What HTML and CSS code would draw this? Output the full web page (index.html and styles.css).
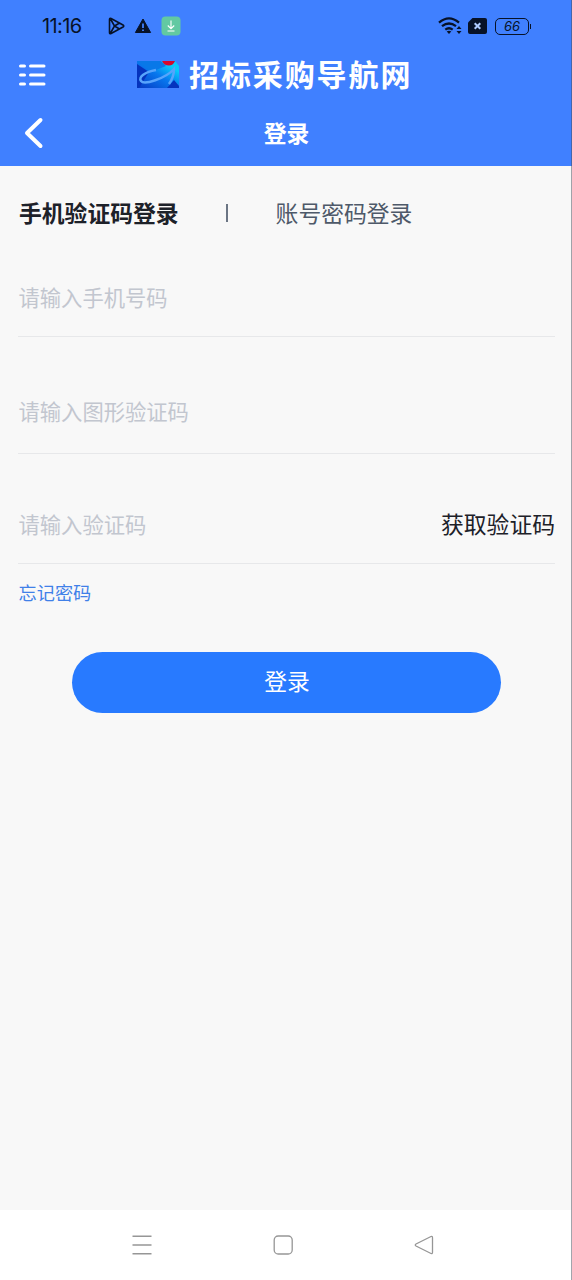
FILE: index.html
```html
<!DOCTYPE html>
<html lang="zh-CN">
<head>
<meta charset="utf-8">
<title>登录</title>
<link rel="stylesheet" href="styles.css">
</head>
<body>
<div class="screen">
  <header class="top">
    <div class="status">
      <span class="clock">11:16</span>
      <svg class="play" width="18" height="20" viewBox="0 0 18 20"><path d="M2.500 3.500v13q0 1.800 1.600 1L16 11q1.500-1 0-2L4.100 2.500q-1.600-.8-1.600 1zM3.500 3L7.500 10l-4 7M7.500 10l5-3M7.500 10l5 3" fill="none" stroke="#071228" stroke-width="1.600"/></svg>
      <svg class="warn" width="18" height="16" viewBox="0 0 18 16"><path d="M9 1l7.600 13.500H1.400z" fill="#071228" stroke="#071228" stroke-linejoin="round"/><path d="M9 5.500v4.500M9 11.400v1.600" stroke="#4080ff" stroke-width="1.800"/></svg>
      <svg class="download" width="20" height="20" viewBox="0 0 20 20"><rect x=".5" y=".5" width="19" height="19" rx="4" fill="#62c9a2"/><path d="M10 4.500v8M6.800 9.500l3.200 3.200 3.200-3.200M6.500 15h7" fill="none" stroke="#fff" stroke-width="1.100"/></svg>
      <div class="system">
        <svg width="25" height="20" viewBox="0 0 25 20"><g fill="none" stroke="#071228" stroke-width="2.300"><path d="M1 6.600q10-8.500 20 0M4 10.200q7-5.500 14 0M7.300 13.600q3.700-2.700 7.400 0"/></g><path d="M8.700 15.600q2.300-1.600 4.600 0L11 18zM18.500 13l2.500-3 2.500 3zM18.500 15l2.500 3 2.500-3z" fill="#071228"/></svg>
        <svg width="19" height="16" viewBox="0 0 19 16"><path d="M4.500 0H17q2 0 2 2v12q0 2-2 2H2q-2 0-2-2V4.500z" fill="#071228"/><path d="M6.700 5.200l5.600 5.600M12.300 5.200l-5.600 5.600" stroke="#aecbff" stroke-width="2"/></svg>
        <span class="battery">66</span>
      </div>
    </div>
    <div class="brand">
      <svg class="menu" width="27" height="24" viewBox="0 0 27 24"><path d="M1.500 3h4M11.500 3h13.500M1.500 12h4M11.500 12h13.500M1.500 21h4M11.500 21h13.500" stroke="#fff" stroke-width="3" stroke-linecap="round"/></svg>
      <svg class="logo" width="42" height="27" viewBox="0 0 42 27">
        <defs><linearGradient id="sea" x1="0" y1="1" x2="1" y2="0"><stop offset="0" stop-color="#0638c4"/><stop offset=".5" stop-color="#0878ee"/><stop offset=".8" stop-color="#09c9fa"/></linearGradient></defs>
        <path d="M0 0h39l3 4v23H0z" fill="url(#sea)"/>
        <path d="M0 3L12 11 2 27H0zM37 19l5 6v2H30z" fill="#0533bd"/>
        <path d="M0 0h24l5 5-15 6z" fill="#0878e8"/>
        <path d="M38 0h4v5z" fill="#4080ff"/>
        <path d="M25 0h13q-2 4.500-6 4.500-5 0-7-4.500z" fill="#d4082c"/>
        <path d="M19 9C8 11 1 16 4 20c3 4 24-2 33-12q0 8-5 15" fill="none" stroke="#58a4fc" stroke-width="2.500"/>
      </svg>
      <span class="name">招标采购导航网</span>
    </div>
    <div class="titlebar">
      <svg class="back" width="22" height="34" viewBox="0 0 22 34"><path d="M18.500 4L5 17l13.500 13" fill="none" stroke="#fff" stroke-width="4" stroke-linecap="round" stroke-linejoin="round"/></svg>
      <h1>登录</h1>
    </div>
  </header>
  <main class="form">
    <div class="tabs"><span class="active">手机验证码登录</span><i class="divider"></i><span class="tab">账号密码登录</span></div>
    <div class="field phone">请输入手机号码</div>
    <div class="field captcha">请输入图形验证码</div>
    <div class="field code"><span>请输入验证码</span><span class="send">获取验证码</span></div>
    <a class="forgot">忘记密码</a>
    <button class="submit">登录</button>
  </main>
  <nav class="keys">
    <svg width="20" height="22" viewBox="0 0 20 22"><path d="M.5 2.300h19M.5 11h19M.5 19.700h19" stroke="#969696" stroke-width="1.500"/></svg>
    <svg width="20" height="22" viewBox="0 0 20 22"><rect x="1.200" y="2" width="18" height="18" rx="4" fill="none" stroke="#969696" stroke-width="1.300"/></svg>
    <svg width="20" height="22" viewBox="0 0 20 22"><path d="M17 2.500L2 10q-1.500 1 0 2l15 7.500q1.500.5 1.500-1.200V3.700Q18.500 2 17 2.500z" fill="none" stroke="#969696" stroke-width="1.300"/></svg>
  </nav>
</div>
</body>
</html>
```
FILE: styles.css
```css
* { box-sizing: border-box; }
body { margin: 0; font-family: "Noto Sans CJK SC", sans-serif; }
.screen { position: relative; width: 572px; height: 1280px; display: flex; flex-direction: column; background: #f8f8f8; }
.screen::after { content: ""; position: absolute; right: 0; top: 0; width: 1px; height: 1280px; background: rgba(70, 75, 90, .5); }
svg { display: block; flex: none; }
.top { height: 166px; background: #4080ff; color: #fff; }
.status { height: 50px; display: flex; align-items: center; padding: 2px 43px 0 42px; color: #071228; }
.clock { width: 65px; font: 400 20px/24px Inter, sans-serif; letter-spacing: -.6px; }
.warn { margin-left: 9px; }
.download { margin-left: 9px; }
.system { display: flex; align-items: center; gap: 6px; margin-left: auto; }
.system svg:first-child { margin-right: -1px; }
.battery { position: relative; width: 34px; height: 17px; margin-left: 2px; border: 1.500px solid #071228; border-radius: 5px; font: italic 13px/14px Inter, sans-serif; text-align: center; }
.battery::after { content: ""; position: absolute; right: -3px; top: 5px; width: 1px; height: 5px; background: #071228; }
.brand { height: 50px; display: flex; align-items: center; padding-left: 19px; }
.logo { margin-left: 91px; margin-top: -2px; }
.name { margin-left: 10px; padding-bottom: 4px; font-size: 30px; line-height: 44px; font-weight: 700; letter-spacing: 1.900px; }
.titlebar { height: 66px; display: grid; grid-template-columns: 60px 1fr 60px; align-items: center; }
.back { margin-left: 22px; }
h1 { margin: 0; padding-left: 1px; font-size: 22.800px; line-height: 34px; font-weight: 700; text-align: center; }
.form { flex: 1; display: flex; flex-direction: column; padding: 0 17px 0 18px; }
.tabs { height: 94px; display: flex; align-items: center; font-size: 22.800px; line-height: 34px; padding-left: 1px; color: #4e5969; }
.active { font-weight: 700; color: #1d2129; }
.active, .tab { padding-bottom: 1px; }
.divider { width: 2px; height: 18px; margin: 0 48px 0 47px; background: #6b7584; }
.field { display: flex; justify-content: space-between; border-bottom: 1px solid #e7e8ea; padding-left: .5px; font-size: 21.300px; line-height: 32px; color: #c2c6cf; }
.phone { height: 77px; padding-top: 21px; }
.captcha { height: 117px; padding-top: 58px; }
.code { height: 110px; padding-top: 54px; }
.send { font-size: 22.800px; color: #1d2129; }
.forgot { margin-top: 14px; padding-left: .5px; font-size: 18.200px; line-height: 28px; color: #4080e8; }
.submit { align-self: center; width: 429px; height: 61px; margin-top: 46px; padding: 0 0 4px 1px; border: 0; border-radius: 31px; background: #287aff; color: #fff; font: 22.800px/34px "Noto Sans CJK SC", sans-serif; }
.keys { height: 70px; background: #fff; display: flex; justify-content: center; align-items: center; gap: 121px; padding-right: 6px; }
```
